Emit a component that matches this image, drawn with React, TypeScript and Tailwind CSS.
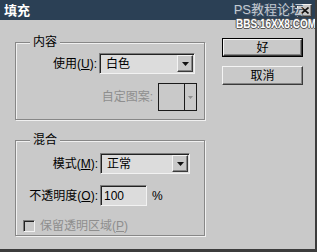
import React from "react";

const font = "font-['Liberation_Sans','Noto_Sans_CJK_SC',sans-serif]";
const sunken =
  "border border-t-[#7c7c7c] border-l-[#7c7c7c] border-r-[#f2f2f2] border-b-[#f2f2f2] shadow-[inset_1px_1px_0_#222]";
const raised =
  "border border-t-[#f4f4f4] border-l-[#f4f4f4] border-r-[#3a3a3a] border-b-[#3a3a3a] shadow-[inset_-1px_-1px_0_#858585]";
const etched =
  "border border-[#878787] shadow-[inset_1px_1px_0_#f0f0f0,1px_1px_0_#f0f0f0]";

function Arrow({ color = "#111" }: { color?: string }) {
  return (
    <svg width="7" height="4" viewBox="0 0 7 4">
      <path d="M0 0h7L3.5 4z" fill={color} />
    </svg>
  );
}

function Select({ value, width }: { value: string; width: string }) {
  return (
    <div className={`${sunken} ${width} h-[21px] bg-[#dcdcdc] flex items-center`}>
      <span className="pl-[6px] flex-1 text-[12px] text-black">{value}</span>
      <div
        className={`${raised} w-[16px] h-[17px] mr-[1px] bg-[#c9c9c9] flex items-center justify-center`}
      >
        <Arrow />
      </div>
    </div>
  );
}

function Group({
  title,
  height,
  children,
}: {
  title: string;
  height: string;
  children: React.ReactNode;
}) {
  return (
    <div className={`${etched} ${height} relative`}>
      <span className="absolute left-[14px] -top-[8px] px-[3px] bg-[#c9c9c9] text-[12px] leading-[14px] text-black">
        {title}
      </span>
      {children}
    </div>
  );
}

export default function App() {
  return (
    <div
      className={`${font} w-[317px] h-[252px] relative overflow-hidden bg-[#c9c9c9] border-r-2 border-b-[3px] border-[#3c3c3c] flex flex-col`}
    >
      {/* title bar */}
      <div className="h-[20px] shrink-0 bg-[#2b4055] flex items-center pl-[4px]">
        <span className="text-white font-bold text-[13px] leading-none">填充</span>
      </div>

      {/* close button + watermark overlay */}
      <div
        className={`${raised} absolute right-[3px] top-[4px] w-[15px] h-[13px] bg-[#c9c9c9] flex items-center justify-center`}
      >
        <svg width="8" height="7" viewBox="0 0 8 7">
          <path d="M0.5 0.5l7 6M7.5 0.5l-7 6" stroke="#111" strokeWidth="1.6" />
        </svg>
      </div>
      <div className="absolute right-[12px] top-[2px] text-[13px] leading-[16px] text-[#c3cad2] [text-shadow:1px_1px_0_#44566a]">
        PS教程论坛
      </div>
      <div className="absolute left-[236px] top-[18px] origin-top-left scale-y-[1.25] font-bold text-[10px] leading-[9px] text-white whitespace-nowrap [text-shadow:1px_0_0_#555,-1px_0_0_#555,0_1px_0_#555,0_-1px_0_#555]">
        BBS.16XX8.COM
      </div>

      {/* body */}
      <div className="flex pl-[15px] pt-[18px]">
        <div className="w-[190px]">
          <div className="mt-[4px]">
            <Group title="内容" height="h-[78px]">
              <div className="pt-[10px]">
                <div className="flex items-center">
                  <span className="w-[81px] text-right text-[12px] text-black">
                    使用(<span className="underline">U</span>):
                  </span>
                  <div className="ml-[2px]">
                    <Select value="白色" width="w-[96px]" />
                  </div>
                </div>
                <div className="mt-[9px] flex items-center justify-end pr-[7px]">
                  <span className="text-[12px] text-[#8e8e8e] mr-[5px]">自定图案:</span>
                  <div className="w-[39px] h-[28px] border border-[#1a1a1a] flex">
                    <div className="w-[26px] border-r border-[#1a1a1a]" />
                    <div className="flex-1 flex items-center justify-center">
                      <svg width="5" height="3" viewBox="0 0 5 3">
                        <path d="M0 0h5L2.5 3z" fill="#8e8e8e" />
                      </svg>
                    </div>
                  </div>
                </div>
              </div>
            </Group>
          </div>

          <div className="mt-[20px]">
            <Group title="混合" height="h-[96px]">
              <div className="pt-[12px]">
                <div className="flex items-center">
                  <span className="w-[82px] text-right text-[12px] text-black">
                    模式(<span className="underline">M</span>):
                  </span>
                  <div className="ml-[2px]">
                    <Select value="正常" width="w-[90px]" />
                  </div>
                </div>
                <div className="mt-[11px] flex items-center">
                  <span className="w-[82px] text-right text-[12px] text-black">
                    不透明度(<span className="underline">O</span>):
                  </span>
                  <div
                    className={`${sunken} ml-[2px] w-[47px] h-[21px] bg-[#dcdcdc] flex items-center pl-[3px] text-[12px] text-black`}
                  >
                    100
                  </div>
                  <span className="ml-[5px] text-[12px] text-black">%</span>
                </div>
                <div className="mt-[11px] flex items-center pl-[7px]">
                  <div className={`${sunken} w-[12px] h-[12px] bg-[#c9c9c9]`} />
                  <span className="ml-[5px] text-[12px] text-[#8e8e8e]">
                    保留透明区域(<span className="underline">P</span>)
                  </span>
                </div>
              </div>
            </Group>
          </div>
        </div>

        {/* buttons */}
        <div className="ml-[17px] w-[81px] flex flex-col">
          <div className="border border-black">
            <button
              className={`${raised} w-full h-[17px] bg-[#c9c9c9] flex items-center justify-center text-[12px] text-black`}
            >
              好
            </button>
          </div>
          <button
            className={`${raised} mt-[9px] w-full h-[19px] bg-[#c9c9c9] flex items-center justify-center text-[12px] text-black`}
          >
            取消
          </button>
        </div>
      </div>
    </div>
  );
}
